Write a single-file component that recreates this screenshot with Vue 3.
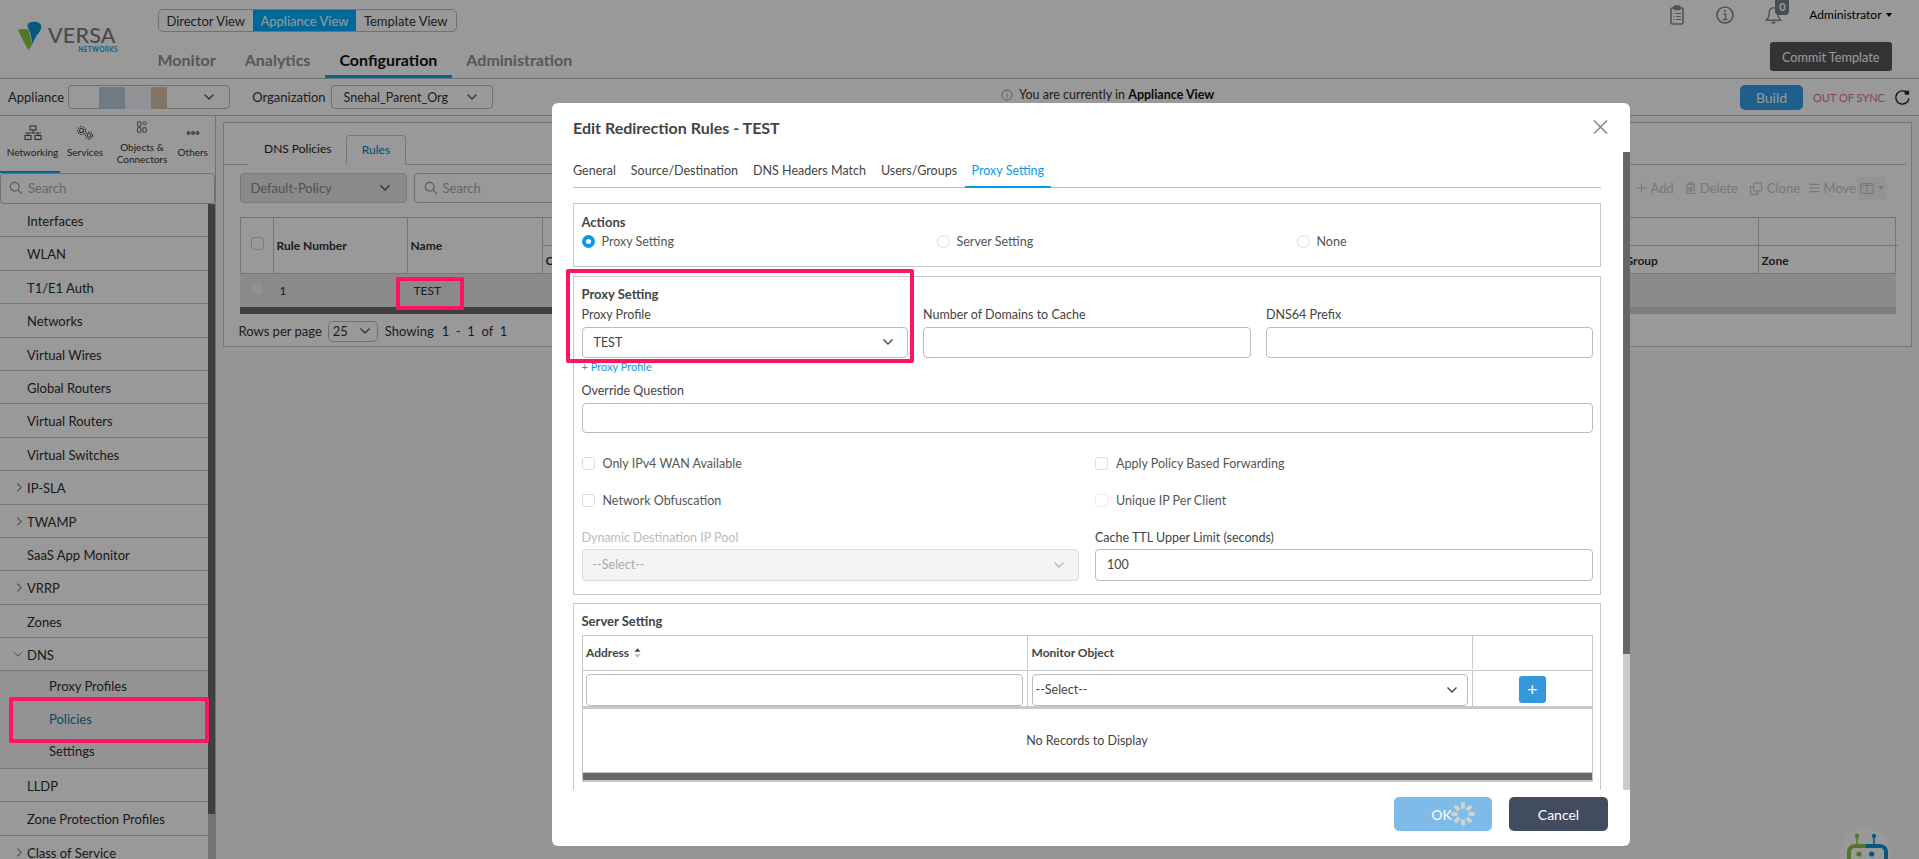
<script setup>
const menu = [
  { t: 'Interfaces' }, { t: 'WLAN' }, { t: 'T1/E1 Auth' }, { t: 'Networks' }, { t: 'Virtual Wires' },
  { t: 'Global Routers' }, { t: 'Virtual Routers' }, { t: 'Virtual Switches' }, { t: 'IP-SLA', c: 1 },
  { t: 'TWAMP', c: 1 }, { t: 'SaaS App Monitor' }, { t: 'VRRP', c: 1 }, { t: 'Zones' }
]
const spokes = [0, 45, 90, 135, 180, 225, 270, 315]
</script>

<template>
  <div class="app">
    <header class="hdr">
      <div class="logo">
        <svg class="logo-mark" viewBox="0 0 26 30">
          <path d="M0 9 C4 8 8 8 11 9 C12 15 14 20 15 24 L11 30 C7 24 3 16 0 9Z" fill="#8cc63f" />
          <path d="M10 3 C13 0 19 0 22 2 C26 5 24 9 21 13 C18 17 16 21 15 24 C14 18 13 12 11 8 C10 6 10 4 10 3Z" fill="#0a94d6" />
        </svg>
        <div class="logo-words">
          <span class="logo-name">VERSA</span>
          <span class="logo-sub">NETWORKS</span>
        </div>
      </div>
      <div class="hdr-mid">
        <div class="views">
          <span class="view v1">Director View</span>
          <span class="view v2 on">Appliance View</span>
          <span class="view v3">Template View</span>
        </div>
        <nav class="nav">
          <span class="nav-i">Monitor</span>
          <span class="nav-i">Analytics</span>
          <span class="nav-i on">Configuration</span>
          <span class="nav-i">Administration</span>
        </nav>
      </div>
      <div class="hdr-right">
        <div class="tools">
          <svg class="ti" viewBox="0 0 18 20" fill="none" stroke="#8a8a8a" stroke-width="1.6">
            <rect x="3" y="3" width="12" height="16" rx="1.5" />
            <rect x="6" y="1" width="6" height="3.5" rx="1" fill="#8a8a8a" />
            <path d="M5.5 8.5h1M8 8.5h5M5.5 11.5h1M8 11.5h5M5.5 14.5h1M8 14.5h5" stroke-width="1.2" />
          </svg>
          <svg class="ti info" viewBox="0 0 20 20" fill="none" stroke="#8a8a8a" stroke-width="1.6">
            <circle cx="10" cy="10" r="8" />
            <circle cx="10" cy="6" r="1.1" fill="#8a8a8a" stroke="none" />
            <path d="M8.5 9h2v5M8 14.4h4.2" stroke-width="1.5" />
          </svg>
          <div class="bell">
            <svg class="ti" viewBox="0 0 20 20" fill="none" stroke="#8a8a8a" stroke-width="1.5">
              <path d="M10 2.5C7 2.5 5.5 5 5.5 8c0 4-1.5 6-3 7.5h15c-1.5-1.5-3-3.5-3-7.5 0-3-1.5-5.5-4.5-5.5Z" />
              <path d="M8 18h4" stroke-width="2" />
            </svg>
            <span class="badge">0</span>
          </div>
          <span class="admin">Administrator</span>
          <span class="caret"></span>
        </div>
        <button class="commit">Commit Template</button>
      </div>
    </header>

    <div class="bar">
      <span class="bar-l">Appliance</span>
      <div class="sel app-sel">
        <span class="blur b1"></span><span class="blur b2"></span><span class="blur b3"></span>
        <svg class="chev" viewBox="0 0 12 8"><path d="M1.5 1.5 6 6l4.5-4.5" /></svg>
      </div>
      <span class="bar-l org-l">Organization</span>
      <div class="sel org-sel">
        <span>Snehal_Parent_Org</span>
        <svg class="chev" viewBox="0 0 12 8"><path d="M1.5 1.5 6 6l4.5-4.5" /></svg>
      </div>
      <div class="notice">
        <svg class="n-ic" viewBox="0 0 12 12" fill="none" stroke="#999" stroke-width="1">
          <circle cx="6" cy="6" r="5" /><path d="M6 5.2v3.4M6 3.2v1" />
        </svg>
        <span>You are currently in <b>Appliance View</b></span>
      </div>
      <button class="build">Build</button>
      <span class="oos">OUT OF SYNC</span>
      <svg class="refresh" viewBox="0 0 18 18" fill="none" stroke="#222" stroke-width="1.5">
        <path d="M14 4.2A7 7 0 1 0 15.8 10" />
        <path d="M11 1.8h5v4.4h-4.4Z" fill="#222" stroke="none" />
      </svg>
    </div>

    <div class="work">
      <aside class="side">
        <div class="side-tabs">
          <div class="st st1 on">
            <svg class="st-ic" viewBox="0 0 18 16" fill="none" stroke="#555" stroke-width="1.1">
              <rect x="6" y="1" width="6" height="4" /><rect x="1" y="10.5" width="6" height="4" /><rect x="11" y="10.5" width="6" height="4" />
              <path d="M9 5v3M1 8h16M4 8v2.5M14 8v2.5" />
            </svg>
            <span>Networking</span>
          </div>
          <div class="st st2">
            <svg class="st-ic" viewBox="0 0 18 16" fill="none" stroke="#555" stroke-width="1.1">
              <circle cx="5.5" cy="5.5" r="2" /><circle cx="5.5" cy="5.5" r="4" stroke-dasharray="1.6 1.2" />
              <circle cx="13" cy="10.5" r="1.8" /><circle cx="13" cy="10.5" r="3.6" stroke-dasharray="1.5 1.1" />
            </svg>
            <span>Services</span>
          </div>
          <div class="st st3">
            <svg class="st-ic big" viewBox="0 0 14 16" fill="none" stroke="#555" stroke-width="1.2">
              <rect x="1" y="1" width="4.5" height="6" rx=".5" /><rect x="1" y="9" width="4.5" height="6" rx=".5" />
              <circle cx="10.5" cy="3" r="2" /><rect x="8.2" y="9" width="4.5" height="6" rx=".5" />
            </svg>
            <span>Objects &amp;<br />Connectors</span>
          </div>
          <div class="st st4">
            <svg class="st-ic" viewBox="0 0 18 16" fill="#888" stroke="#555" stroke-width=".7">
              <circle cx="4.5" cy="8" r="1.6" /><circle cx="9" cy="8" r="1.6" /><circle cx="13.5" cy="8" r="1.6" />
            </svg>
            <span>Others</span>
          </div>
        </div>
        <div class="side-search">
          <svg class="mag" viewBox="0 0 16 16" fill="none" stroke="#999" stroke-width="1.4"><circle cx="6.5" cy="6.5" r="5" /><path d="m10.5 10.5 4.5 4.5" /></svg>
          <span>Search</span>
        </div>
        <div class="list">
          <div class="list-in">
            <div v-for="m in menu" :key="m.t" class="mi">
              <svg v-if="m.c" class="mi-c" viewBox="0 0 8 12"><path d="M1.5 1.5 6 6l-4.5 4.5" /></svg>
              {{ m.t }}
            </div>
            <div class="mi">
              <svg class="mi-c open" viewBox="0 0 12 8"><path d="M1.5 1.5 6 6l4.5-4.5" /></svg>
              DNS
            </div>
            <div class="sub">
              <div class="si">Proxy Profiles</div>
              <div class="si act">Policies</div>
              <div class="si">Settings</div>
            </div>
            <div class="mi">LLDP</div>
            <div class="mi">Zone Protection Profiles</div>
            <div class="mi">
              <svg class="mi-c" viewBox="0 0 8 12"><path d="M1.5 1.5 6 6l-4.5 4.5" /></svg>
              Class of Service
            </div>
          </div>
          <div class="list-track"><div class="list-thumb"></div></div>
        </div>
      </aside>

      <main class="main">
        <section class="panel">
          <div class="ptabs">
            <span class="ptab">DNS Policies</span>
            <span class="ptab on">Rules</span>
          </div>
          <div class="ptools">
            <div class="sel dis pol-sel">
              <span>Default-Policy</span>
              <svg class="chev" viewBox="0 0 12 8"><path d="M1.5 1.5 6 6l4.5-4.5" /></svg>
            </div>
            <div class="sel psearch">
              <svg class="mag" viewBox="0 0 16 16" fill="none" stroke="#999" stroke-width="1.4"><circle cx="6.5" cy="6.5" r="5" /><path d="m10.5 10.5 4.5 4.5" /></svg>
              <span class="ph">Search</span>
            </div>
            <div class="acts">
              <span class="a a1"><svg viewBox="0 0 12 12" class="a-ic"><path d="M6 .5v11M.5 6h11" /></svg>Add</span>
              <span class="a a2"><svg viewBox="0 0 12 14" class="a-ic tall-ic"><path d="M1 3h10M4 3V1.5h4V3M2 3v10h8V3M4.5 5.5v5.5M6 5.5v5.5M7.5 5.5v5.5" /></svg>Delete</span>
              <span class="a a3"><svg viewBox="0 0 14 14" class="a-ic wide"><rect x="4.5" y="1" width="8.5" height="8.5" rx="1" /><path d="M4.5 5H1v8h8V9.5" /></svg>Clone</span>
              <span class="a a4"><svg viewBox="0 0 12 12" class="a-ic"><path d="M.5 2h11M.5 6h11M.5 10h11" /></svg>Move</span>
              <span class="colbtn">
                <svg viewBox="0 0 14 12" class="a-ic wide"><rect x="1" y="1" width="12" height="10" rx="1" /><path d="M7 1v10M1 3h12" /></svg>
                <i class="mini-caret"></i>
              </span>
            </div>
          </div>
          <div class="tbl">
            <div class="thead">
              <div class="th chk"><i class="cb"></i></div>
              <div class="th rn">Rule Number</div>
              <div class="th nm">Name</div>
              <div class="th top-a"></div>
              <div class="th top-b"></div>
              <div class="th sub1">Category</div>
              <div class="th sub2">Group</div>
              <div class="th sub3">Zone</div>
            </div>
            <div class="trow">
              <div class="td c1"><i class="cb fill"></i></div>
              <div class="td c2">1</div>
              <div class="td c3">TEST</div>
            </div>
            <div class="tscroll"><div class="tthumb"></div></div>
          </div>
          <div class="pager">
            <span>Rows per page</span>
            <div class="sel rpp">
              <span>25</span>
              <svg class="chev" viewBox="0 0 12 8"><path d="M1.5 1.5 6 6l4.5-4.5" /></svg>
            </div>
            <span class="showing">Showing</span>
            <span class="pg">1&nbsp; -&nbsp; 1&nbsp; of&nbsp; 1</span>
          </div>
        </section>
      </main>
    </div>

    <div class="bot">
      <svg viewBox="0 0 52 31" class="bot-svg">
        <circle cx="26" cy="26" r="26" fill="#fff" />
        <path d="M18 8v9" stroke="#8cc63f" stroke-width="1.5" />
        <path d="M35 8v9" stroke="#0a94d6" stroke-width="1.5" />
        <circle cx="18" cy="8" r="2.2" fill="#8cc63f" />
        <circle cx="35" cy="8" r="2.2" fill="#0a94d6" />
        <path d="M26.5 18H16c-4 0-6 3-6 6v10" fill="none" stroke="#8cc63f" stroke-width="4" />
        <path d="M26.5 18H41c4 0 6 3 6 6v10" fill="none" stroke="#0a94d6" stroke-width="4" />
        <circle cx="20" cy="26" r="2.6" fill="#8cc63f" />
        <circle cx="32.7" cy="26" r="2.6" fill="#0a94d6" />
      </svg>
    </div>

    <div class="dim"></div>

    <div class="modal">
      <div class="m-head">
        <h2 class="m-title">Edit Redirection Rules - TEST</h2>
        <svg class="m-x" viewBox="0 0 15 14" fill="none" stroke="#888" stroke-width="1.5"><path d="m1 .5 13 13M14 .5l-13 13" /></svg>
      </div>
      <div class="m-body">
        <div class="m-tabs">
          <span class="mt">General</span>
          <span class="mt">Source/Destination</span>
          <span class="mt">DNS Headers Match</span>
          <span class="mt">Users/Groups</span>
          <span class="mt on">Proxy Setting</span>
        </div>

        <div class="box actions">
          <div class="sec">Actions</div>
          <div class="radios">
            <label class="rad"><i class="dot on"></i>Proxy Setting</label>
            <label class="rad"><i class="dot"></i>Server Setting</label>
            <label class="rad"><i class="dot"></i>None</label>
          </div>
        </div>

        <div class="box proxy">
          <div class="sec">Proxy Setting</div>
          <div class="g3">
            <div>
              <div class="lb">Proxy Profile</div>
              <div class="inp">
                <span>TEST</span>
                <svg class="chev dk" viewBox="0 0 12 8"><path d="M1.5 1.5 6 6l4.5-4.5" /></svg>
              </div>
            </div>
            <div>
              <div class="lb">Number of Domains to Cache</div>
              <div class="inp"></div>
            </div>
            <div>
              <div class="lb">DNS64 Prefix</div>
              <div class="inp"></div>
            </div>
          </div>
          <div class="addlink">+ Proxy Profile</div>
          <div class="lb ov">Override Question</div>
          <div class="inp ovi"></div>
          <div class="g2 r1">
            <label class="ck"><i class="cbx"></i>Only IPv4 WAN Available</label>
            <label class="ck"><i class="cbx"></i>Apply Policy Based Forwarding</label>
          </div>
          <div class="g2 r2">
            <label class="ck"><i class="cbx"></i>Network Obfuscation</label>
            <label class="ck"><i class="cbx fd"></i>Unique IP Per Client</label>
          </div>
          <div class="g2 r3">
            <div>
              <div class="lb off">Dynamic Destination IP Pool</div>
              <div class="inp tall disabled">
                <span>--Select--</span>
                <svg class="chev lt" viewBox="0 0 12 8"><path d="M1.5 1.5 6 6l4.5-4.5" /></svg>
              </div>
            </div>
            <div>
              <div class="lb">Cache TTL Upper Limit (seconds)</div>
              <div class="inp tall"><span>100</span></div>
            </div>
          </div>
        </div>

        <div class="box server">
          <div class="sec">Server Setting</div>
          <div class="stbl">
            <div class="sh">
              <div class="sc s1">Address
                <svg class="sort" viewBox="0 0 8 11"><path d="M4 0l3.5 4h-7Z" fill="#444" /><path d="M4 11 .5 7h7Z" fill="#bbb" /></svg>
              </div>
              <div class="sc s2">Monitor Object</div>
              <div class="sc s3"></div>
            </div>
            <div class="sr">
              <div class="sc s1"><div class="inp cell"></div></div>
              <div class="sc s2">
                <div class="inp cell">
                  <span>--Select--</span>
                  <svg class="chev dk" viewBox="0 0 12 8"><path d="M1.5 1.5 6 6l4.5-4.5" /></svg>
                </div>
              </div>
              <div class="sc s3"><button class="plus">+</button></div>
            </div>
            <div class="empty">No Records to Display</div>
            <div class="sbar"></div>
          </div>
        </div>

        <div class="m-track"><div class="m-thumb"></div></div>
      </div>
      <div class="m-foot">
        <button class="btn ok">
          OK
          <svg class="spin" viewBox="0 0 24 24" stroke="#d2d2d2" stroke-width="4">
            <path v-for="s in spokes" :key="s" d="M12 .5V6.5" :transform="`rotate(${s} 12 12)`" />
          </svg>
        </button>
        <button class="btn cancel">Cancel</button>
      </div>
    </div>

    <div class="mark mk-test"></div>
    <div class="mark mk-pol"></div>
    <div class="mark mk-proxy"></div>
  </div>
</template>

<style>
html, body { margin: 0; background: #fff; overflow: hidden; }
</style>

<style scoped>
.app { position: relative; width: 1919px; height: 859px; overflow: hidden; background: #fff; font-family: Lato, "Noto Sans", sans-serif; font-size: 13px; color: #333; }
* { box-sizing: border-box; }
button { font-family: inherit; border: 0; padding: 0; }
.chev { width: 12px; height: 8px; fill: none; stroke: #555; stroke-width: 1.4; flex: none; margin-left: auto; }

.hdr { display: flex; height: 79px; border-bottom: 1px solid #bdbdbd; }
.logo { width: 157.5px; display: flex; padding: 21px 0 0 18px; }
.logo-mark { width: 25px; height: 29px; }
.logo-words { display: flex; flex-direction: column; margin-left: 5px; width: 70px; }
.logo-name { font-size: 21.5px; line-height: 20px; margin-top: 4px; color: #7b7b7f; letter-spacing: .2px; font-weight: 500; }
.logo-sub { font-size: 6.5px; line-height: 7px; margin-top: 1px; font-weight: 700; color: #16a0dc; align-self: flex-end; letter-spacing: .35px; }
.hdr-mid { display: flex; flex-direction: column; }
.views { display: flex; margin-top: 9px; width: 299px; height: 24px; border: 1px solid #bbb; border-radius: 5px; overflow: hidden; }
.view { display: flex; align-items: center; justify-content: center; font-size: 13px; color: #333; }
.v1 { width: 94.5px; } .v2 { width: 103px; } .v3 { flex: 1; }
.view.on { background: #00aeff; color: #fff; }
.nav { display: flex; margin: 11px 0 0 -14.5px; height: 35px; }
.nav-i { padding: 0 14.5px; font-size: 16px; line-height: 34px; font-weight: 700; color: #919191; }
.nav-i.on { color: #111; border-bottom: 3px solid #00aeff; }
.hdr-right { margin-left: auto; padding-right: 27.5px; display: flex; flex-direction: column; align-items: flex-end; }
.tools { display: flex; align-items: center; height: 42px; padding-bottom: 13px; }
.ti { width: 18px; height: 20px; display: block; }
.info { margin-left: 29px; width: 20px; }
.bell { position: relative; margin-left: 29px; }
.bell .ti { width: 19px; height: 20px; }
.badge { position: absolute; left: 11px; top: -7px; width: 14px; height: 17px; background: #7a8088; border-radius: 0 0 4px 4px; color: #fff; font-size: 11px; line-height: 17px; text-align: center; font-weight: 700; }
.admin { margin-left: 26px; font-size: 12px; color: #000; }
.caret, .mini-caret { display: inline-block; border-top: 4px solid #000; border-left: 3px solid transparent; border-right: 3px solid transparent; margin-left: 4px; }
.commit { width: 121.5px; height: 29px; border-radius: 3px; background: #555; color: #fff; font-size: 12.7px; }

.bar { display: flex; align-items: center; height: 37px; border-bottom: 1px solid #bdbdbd; padding-left: 8px; position: relative; }
.bar-l { font-size: 13px; color: #333; }
.sel { display: flex; align-items: center; border: 1px solid #bbb; border-radius: 4px; }
.app-sel { position: relative; margin-left: 4px; width: 162px; height: 24px; padding: 0 14px 0 30px; }
.blur { height: 22px; width: 26px; flex: none; position: relative; top: 1px; }
.b1 { background: #b9cddd; } .b2 { background: #f0f3f8; } .b3 { background: #dbc3ab; width: 16px; }
.org-l { margin-left: 22px; }
.org-sel { margin-left: 5px; width: 162px; height: 24px; padding: 0 14px 0 12px; font-size: 12.5px; }
.notice { position: absolute; left: 1001px; top: 8px; display: flex; align-items: center; font-size: 12.5px; }
.n-ic { width: 12px; height: 12px; margin-right: 6px; }
.notice b { font-weight: 700; color: #111; }
.build { margin-left: auto; width: 63px; height: 25px; border-radius: 5px; background: #339ee8; color: #fff; font-size: 14px; }
.oos { margin-left: 10px; font-size: 11px; color: #e0758a; width: 71px; white-space: nowrap; }
.refresh { width: 17px; height: 17px; margin: 0 8px 0 10px; }

.work { display: flex; height: 743px; }
.side { width: 216px; flex: none; border-right: 1px solid #bdbdbd; display: flex; flex-direction: column; }
.side-tabs { position: relative; display: flex; height: 57px; flex: none; }
.st { display: flex; flex-direction: column; align-items: center; justify-content: flex-end; padding-bottom: 15px; text-align: center; font-size: 10px; line-height: 12px; color: #333; position: relative; }
.st1 { width: 60px; border-bottom: 2px solid #00aeff; padding: 0 0 13px 5px; }
.st2 { width: 50px; } .st3 { width: 64px; } .st4 { width: 37.5px; }
.st-ic { width: 18px; height: 16px; margin-bottom: 5px; }
.st-ic.big { width: 12px; height: 12px; margin-bottom: 8px; }
.st3 { padding-bottom: 8px; }
.side-search { display: flex; align-items: center; height: 31px; flex: none; border: 1px solid #bbb; border-radius: 4px; padding: 0 0 1px 8px; color: #aaa; font-size: 13px; }
.mag { width: 14px; height: 14px; margin-right: 5px; flex: none; }
.list { position: relative; flex: 1; overflow: hidden; }
.list-in { width: 208px; }
.mi { position: relative; height: 33.4px; border-bottom: 1px solid #c8c8c8; padding-left: 27px; line-height: 34px; font-size: 13px; color: #2d2d2d; }
.mi-c { position: absolute; left: 16px; top: 11px; width: 7px; height: 11px; fill: none; stroke: #777; stroke-width: 1.2; }
.mi-c.open { left: 13px; top: 13px; width: 10px; height: 7px; }
.sub { height: 97.5px; border-bottom: 1px solid #c8c8c8; background: #f6f6f6; }
.si { height: 32.4px; line-height: 31.5px; padding-left: 49px; font-size: 13px; color: #2d2d2d; }
.si.act { color: #0079b8; }
.list-track { position: absolute; right: 0; top: 0; bottom: 0; width: 7px; background: #c2c2c2; }
.list-thumb { height: 610px; background: #696969; }

.main { flex: 1; background: #f8f8fa; padding: 6px 7px 0 7px; }
.panel { width: 1689px; height: 225px; background: #fff; border: 1px solid #c5c5c5; }
.ptabs { display: flex; height: 42px; padding: 12px 0 0 24px; margin-right: 5px; border-bottom: 1px solid #c5c5c5; }
.ptab { width: 98px; height: 30px; line-height: 28px; padding-left: 16px; font-size: 12px; color: #222; border-bottom: 1px solid #fff; }
.ptab.on { width: 60px; padding: 0; text-align: center; color: #0079b8; border: 1px solid #c5c5c5; border-bottom-color: #fff; border-radius: 4px 4px 0 0; }
.ptools { display: flex; margin-top: 8px; padding: 0 24px 0 15.5px; height: 30px; }
.pol-sel { width: 167px; padding: 0 15px 0 10px; font-size: 13px; }
.dis { background: #e6e6e6; color: #888; border-color: #ccc; }
.psearch { margin-left: 7px; width: 300px; padding-left: 9px; }
.ph { font-size: 13px; color: #aaa; }
.acts { margin-left: auto; display: flex; align-items: center; color: #c8c8c8; font-size: 13px; }
.a { display: flex; align-items: center; }
.a-ic { width: 11px; height: 12px; margin-right: 4px; fill: none; stroke: #c8c8c8; stroke-width: 1.2; }
.a-ic.wide { width: 14px; height: 13px; }
.a-ic.tall-ic { height: 14px; }
.a1, .a2 { margin-right: 11px; }
.a3 { margin-right: 8.5px; }
.a4 { margin-right: 1px; }
.colbtn { display: flex; align-items: center; width: 30px; height: 23px; background: #f5f5f5; padding-left: 3px; }
.mini-caret { border-top-color: #c8c8c8; margin-left: 0; }
.tbl { margin: 14px 15px 0 15.5px; }
.thead { display: grid; grid-template-columns: 33px 134px 135px 1079px 137px 139.5px; grid-template-rows: 28px 28px; border: 1px solid #c5c5c5; height: 57px; }
.th { border-right: 1px solid #c5c5c5; font-weight: 700; font-size: 12px; color: #333; display: flex; align-items: center; padding-left: 3px; }
.chk, .rn, .nm { grid-row: 1 / 3; }
.rn, .nm { padding-bottom: 2px; }
.chk { padding-left: 10px; padding-bottom: 6px; }
.top-a { grid-column: 4 / 6; border-bottom: 1px solid #c5c5c5; }
.top-b { grid-column: 6; border-right: 0; border-bottom: 1px solid #c5c5c5; }
.sub3 { border-right: 0; }
.cb { display: block; width: 13px; height: 13px; border: 1px solid #ccc; border-radius: 3px; }
.cb.fill { background: #f2f2f2; border-color: #e0e0e0; }
.trow { display: flex; height: 33px; background: #e6e6e6; font-size: 12px; }
.td { display: flex; align-items: center; }
.c1 { width: 33px; padding: 0 0 4px 11px; }
.c2 { width: 141px; padding-left: 7px; }
.tscroll { height: 7px; background: #d2d2d2; }
.tthumb { width: 1200px; height: 7px; background: #6b6b6b; }
.pager { display: flex; align-items: center; height: 32px; margin-left: 14.5px; font-size: 13px; padding-top: 2px; }
.rpp { margin-left: 6px; width: 50px; height: 21px; padding: 0 6px 0 4px; font-size: 13px; border-radius: 5px; }
.showing { margin-left: 7px; }
.pg { margin-left: 8px; }

.bot { position: absolute; left: 1839px; top: 828px; width: 52px; height: 31px; }
.bot-svg { display: block; width: 52px; height: 31px; }
.dim { position: absolute; inset: 0; background: rgba(0, 0, 0, .4); }

.modal { position: absolute; left: 552px; top: 103px; width: 1078px; height: 743px; background: #fff; border-radius: 6px; display: flex; flex-direction: column; overflow: hidden; }
.m-head { position: relative; height: 49px; flex: none; padding: 0 0 0 21px; }
.m-title { margin: 0; font-size: 16px; line-height: 50px; font-weight: 700; color: #444; }
.m-x { position: absolute; left: 1041px; top: 17px; width: 15px; height: 14px; }
.m-body { position: relative; flex: 1; overflow: hidden; padding: 0 29px 0 21px; }
.m-tabs { display: flex; height: 36px; border-bottom: 1px solid #bbb; }
.mt { padding: 0 7px; margin-right: 1px; line-height: 38px; font-size: 12.5px; color: #444; }
.mt:first-child { padding-left: 0; }
.mt.on { color: #0a9be8; border-bottom: 2px solid #0a9be8; height: 36px; margin-left: -.5px; }
.box { border: 1px solid #c8c8c8; padding: 0 7.5px; }
.sec { margin-top: 9px; height: 17px; line-height: 17px; font-size: 13px; font-weight: 700; color: #444; }
.actions { margin-top: 15px; height: 64px; }
.actions .sec { margin-top: 10px; }
.radios { display: grid; grid-template-columns: 355px 360px 1fr; margin-top: 1px; }
.rad { display: flex; align-items: center; height: 18px; font-size: 12.5px; color: #555; }
.dot { width: 13px; height: 13px; border-radius: 50%; border: 1px solid #ddd; margin-right: 7px; flex: none; }
.dot.on { border: 4px solid #0a9be8; }
.proxy { margin-top: 9px; height: 319px; }
.g3 { display: grid; grid-template-columns: 326.5px 328px 326.5px; column-gap: 15px; margin-top: 3px; }
.lb { height: 17px; line-height: 17px; font-size: 12.5px; color: #444; margin-bottom: 4px; white-space: nowrap; }
.inp { display: flex; align-items: center; height: 31px; border: 1px solid #bbb; border-radius: 4px; padding: 0 13px 1px 11px; font-size: 12.5px; color: #444; }
.addlink { margin-top: 2px; height: 14px; line-height: 14px; font-size: 11px; color: #0a9be8; }
.ov { margin: 8px 0 4px; }
.ovi { height: 30px; }
.g2 { display: grid; grid-template-columns: 497px 497.5px; column-gap: 16.5px; }
.r1 { margin-top: 21px; } .r2 { margin-top: 19px; } .r3 { margin-top: 20px; }
.r3 .lb { margin-bottom: 3px; }
.ck { display: flex; align-items: center; height: 18px; font-size: 12.5px; color: #555; }
.cbx { display: block; width: 13px; height: 13px; border: 1px solid #ddd; border-radius: 3px; margin-right: 8px; flex: none; }
.cbx.fd { border-color: #eee; }
.tall { height: 32px; }
.off { color: #bbb; }
.disabled { background: #f4f4f4; border-color: #ddd; color: #aaa; padding-left: 10px; }
.chev.dk { stroke: #444; }
.chev.lt { stroke: #bbb; }
.server { margin-top: 8px; height: 220px; }
.stbl { margin-top: 5px; border: 1px solid #c8c8c8; }
.sh, .sr { display: grid; grid-template-columns: 445.5px 445px 1fr; }
.sh { height: 35px; border-bottom: 1px solid #c8c8c8; padding-bottom: 1px; }
.sr { height: 38px; border-bottom: 3px solid #c8c8c8; }
.sc { border-right: 1px solid #c8c8c8; display: flex; align-items: center; padding-left: 3.5px; }
.sc.s3 { border-right: 0; justify-content: center; padding: 0; }
.sr .sc { align-items: flex-start; padding-top: 3px; }
.sr .sc.s3 { padding-top: 5px; }
.sh .sc { font-size: 12px; font-weight: 700; color: #444; }
.sort { width: 7px; height: 10px; margin-left: 5px; }
.cell { width: 436.5px; height: 32px; padding: 0 9px 1px 3px; }
.plus { width: 27px; height: 27px; border-radius: 3px; background: #3498db; color: #fff; font-size: 18px; line-height: 25px; }
.empty { height: 64px; line-height: 63px; text-align: center; font-size: 12.5px; color: #444; border-bottom: 1px solid #c8c8c8; }
.sbar { height: 8px; background: #666; border-bottom: 1px solid #c8c8c8; }
.m-track { position: absolute; right: 0; top: 0; bottom: 0; width: 7px; background: #ccc; }
.m-thumb { height: 502px; background: #666; }
.m-foot { flex: none; height: 56px; display: flex; gap: 17px; padding: 7px 22px 0 0; justify-content: flex-end; }
.btn { position: relative; width: 98px; height: 34px; border-radius: 5px; font-size: 14px; color: #fff; }
.ok { background: #7fbbe8; padding-right: 3px; }
.cancel { background: #414d5f; width: 99px; }
.spin { position: absolute; left: 57px; top: 5px; width: 24px; height: 24px; }

.mark { position: absolute; border: 4px solid #ff1464; border-radius: 2px; }
.mk-test { left: 396px; top: 277px; width: 68px; height: 33px; }
.mk-pol { left: 9px; top: 697px; width: 200px; height: 46px; }
.mk-proxy { left: 566px; top: 269px; width: 348px; height: 94px; }
</style>
